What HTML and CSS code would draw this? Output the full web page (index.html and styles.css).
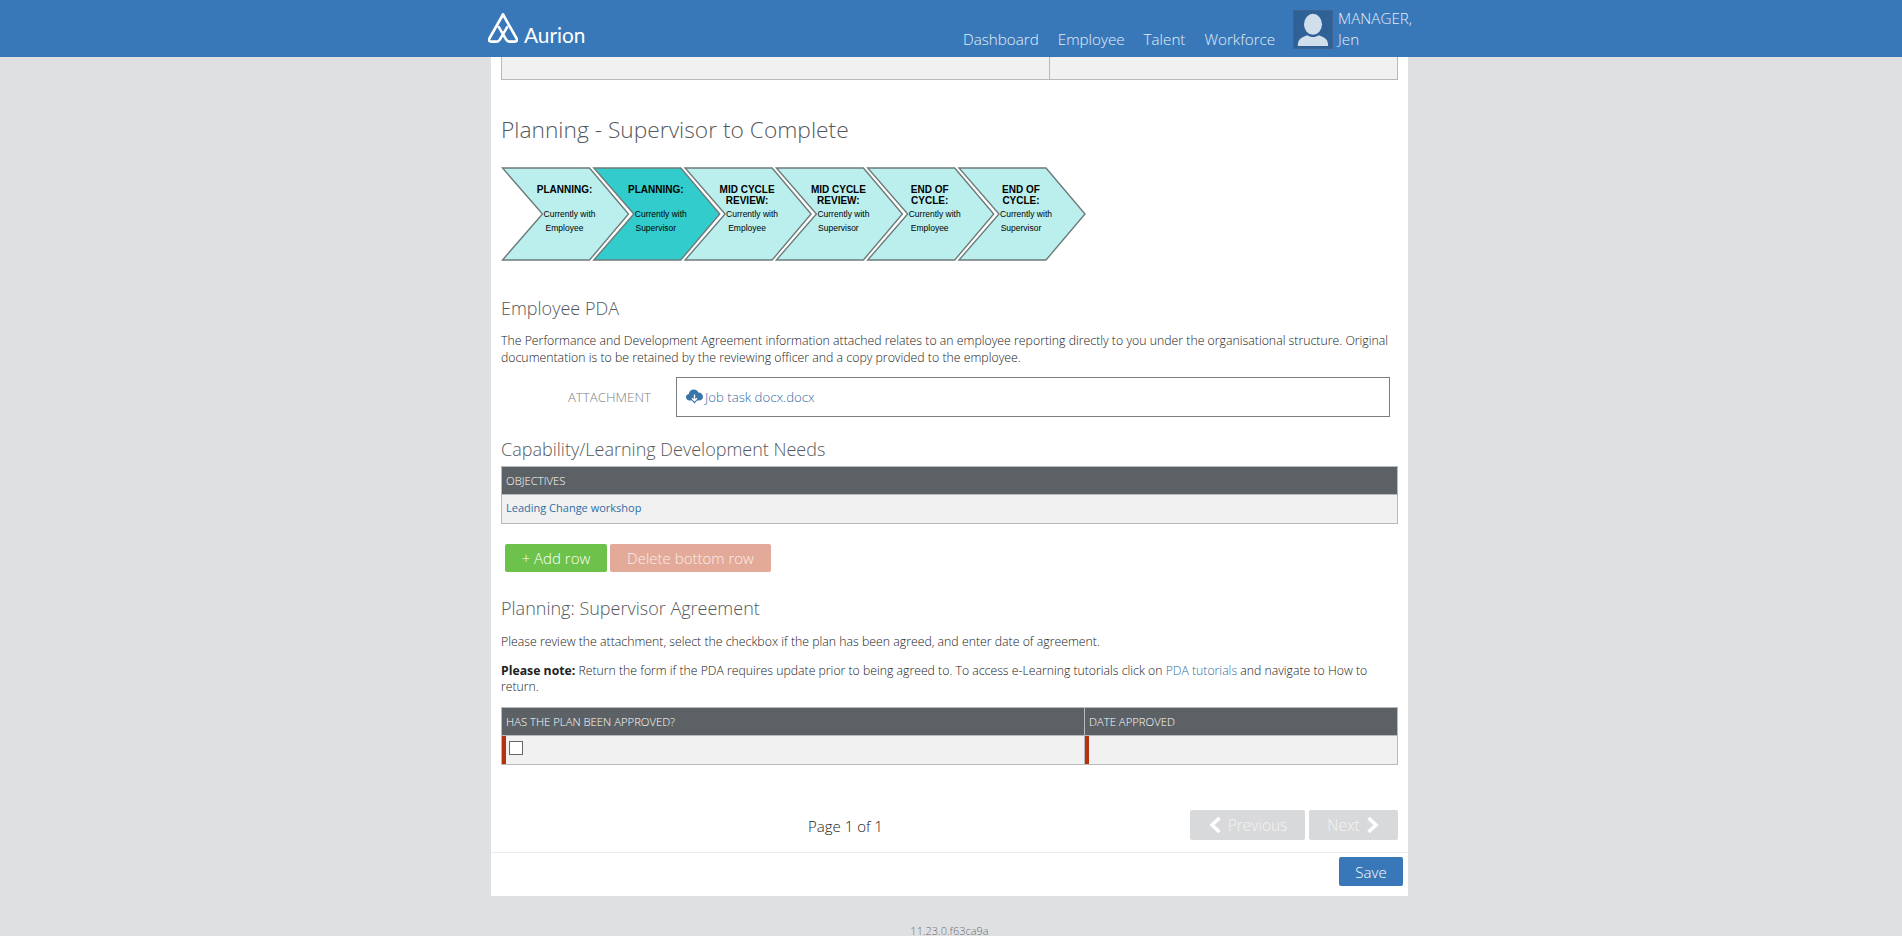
FILE: index.html
```html
<!DOCTYPE html>
<html lang="en">
<head>
    <meta charset="UTF-8">
    <meta name="viewport" content="width=device-width, initial-scale=1.0">
    <title>Planning - Supervisor to Complete</title>
    <link rel="stylesheet" href="styles.css">
</head>
<body>
    <header class="topbar">
        <div class="topbar-inner">
            <a class="logo" href="#">
                <svg class="logo-mark" viewBox="0 0 30 30" width="30" height="30">
                    <path d="M15 1.5 L28.6 25.5 Q30 28.6 26.6 28.6 L21.4 28.6 Q19.4 28.6 18.2 26.6 L10.8 14.2"></path>
                    <path d="M15 1.5 L1.4 25.5 Q0 28.6 3.4 28.6 L8.6 28.6 Q10.6 28.6 11.8 26.6 L19.2 14.2"></path>
                </svg>
                <span class="logo-text">Aurion</span>
            </a>
            <nav class="nav">
                <a href="#">Dashboard</a>
                <a href="#">Employee</a>
                <a href="#">Talent</a>
                <a href="#">Workforce</a>
            </nav>
            <div class="user">
                <div class="avatar">
                    <svg viewBox="0 0 40 39" width="38" height="37">
                        <ellipse cx="20" cy="14" rx="9.5" ry="11"></ellipse>
                        <path d="M4 37 C4 31 6 28 14 25.5 C17 28 23 28 26 25.5 C34 28 36 31 36 37 Z"></path>
                    </svg>
                </div>
                <div class="user-name">MANAGER,<br>Jen</div>
            </div>
        </div>
    </header>

    <div class="wrap">
        <main class="page">
            <div class="content">
                <table class="grid stub">
                    <tr>
                        <td class="stub-left"></td>
                        <td></td>
                    </tr>
                </table>

                <h1>Planning - Supervisor to Complete</h1>

                <svg class="steps" viewBox="0 0 600 96" width="600" height="96">
                    <g transform="translate(1.5 2)">
                        <polygon class="step" points="0,0 87,0 126,46 87,92 0,92 40,46"></polygon>
                        <text class="step-title" x="62" y="25">PLANNING:</text>
                        <text class="step-text" x="67" y="48.5">Currently with</text>
                        <text class="step-text" x="62" y="63">Employee</text>
                    </g>
                    <g transform="translate(92.8 2)">
                        <polygon class="step step-active" points="0,0 87,0 126,46 87,92 0,92 40,46"></polygon>
                        <text class="step-title" x="62" y="25">PLANNING:</text>
                        <text class="step-text" x="67" y="48.5">Currently with</text>
                        <text class="step-text" x="62" y="63">Supervisor</text>
                    </g>
                    <g transform="translate(184.1 2)">
                        <polygon class="step" points="0,0 87,0 126,46 87,92 0,92 40,46"></polygon>
                        <text class="step-title" x="62" y="25">MID CYCLE</text>
                        <text class="step-title" x="62" y="36">REVIEW:</text>
                        <text class="step-text" x="67" y="48.5">Currently with</text>
                        <text class="step-text" x="62" y="63">Employee</text>
                    </g>
                    <g transform="translate(275.4 2)">
                        <polygon class="step" points="0,0 87,0 126,46 87,92 0,92 40,46"></polygon>
                        <text class="step-title" x="62" y="25">MID CYCLE</text>
                        <text class="step-title" x="62" y="36">REVIEW:</text>
                        <text class="step-text" x="67" y="48.5">Currently with</text>
                        <text class="step-text" x="62" y="63">Supervisor</text>
                    </g>
                    <g transform="translate(366.7 2)">
                        <polygon class="step" points="0,0 87,0 126,46 87,92 0,92 40,46"></polygon>
                        <text class="step-title" x="62" y="25">END OF</text>
                        <text class="step-title" x="62" y="36">CYCLE:</text>
                        <text class="step-text" x="67" y="48.5">Currently with</text>
                        <text class="step-text" x="62" y="63">Employee</text>
                    </g>
                    <g transform="translate(458 2)">
                        <polygon class="step" points="0,0 87,0 126,46 87,92 0,92 40,46"></polygon>
                        <text class="step-title" x="62" y="25">END OF</text>
                        <text class="step-title" x="62" y="36">CYCLE:</text>
                        <text class="step-text" x="67" y="48.5">Currently with</text>
                        <text class="step-text" x="62" y="63">Supervisor</text>
                    </g>
                </svg>

                <h2 class="pda-title">Employee PDA</h2>
                <p class="intro">The Performance and Development Agreement information attached relates to an employee reporting directly to you under the organisational structure. Original documentation is to be retained by the reviewing officer and a copy provided to the employee.</p>

                <div class="attachment">
                    <div class="attachment-label">ATTACHMENT</div>
                    <div class="attachment-box">
                        <a href="#">
                            <svg class="cloud" viewBox="0 0 17 15" width="17" height="15">
                                <path class="cloud-fill" d="M3.6 11.6 C1.5 11.6 0 10.2 0 8.3 C0 6.7 1.1 5.4 2.7 5.1 C3 2.5 5.1 0.6 7.8 0.6 C9.9 0.6 11.6 1.8 12.4 3.6 C14.9 3.6 17 5.4 17 7.7 C17 9.9 15.2 11.6 13 11.6 L11.2 11.6 L8.5 14.6 L5.8 11.6 Z"></path>
                                <path class="cloud-arrow" d="M8.5 5.5 V11.5 M6 9.2 L8.5 11.8 L11 9.2"></path>
                            </svg>Job task docx.docx</a>
                    </div>
                </div>

                <h2 class="needs-title">Capability/Learning Development Needs</h2>
                <table class="grid">
                    <thead>
                        <tr><th>Objectives</th></tr>
                    </thead>
                    <tbody>
                        <tr><td><a href="#">Leading Change workshop</a></td></tr>
                    </tbody>
                </table>

                <div class="row-buttons">
                    <button class="btn btn-add">+ Add row</button>
                    <button class="btn btn-delete">Delete bottom row</button>
                </div>

                <h2 class="agree-title">Planning: Supervisor Agreement</h2>
                <p class="review">Please review the attachment, select the checkbox if the plan has been agreed, and enter date of agreement.</p>
                <p class="note"><strong>Please note:</strong> Return the form if the PDA requires update prior to being agreed to. To access e-Learning tutorials click on <a href="#">PDA tutorials</a> and navigate to How to return.</p>

                <table class="grid approve">
                    <thead>
                        <tr>
                            <th class="approve-left">Has the plan been approved?</th>
                            <th>Date approved</th>
                        </tr>
                    </thead>
                    <tbody>
                        <tr>
                            <td class="required"><span class="checkbox"></span></td>
                            <td class="required"></td>
                        </tr>
                    </tbody>
                </table>

                <div class="pager">
                    <div class="page-count">Page 1 of 1</div>
                    <button class="btn btn-page btn-prev">
                        <svg viewBox="0 0 14 18" width="14" height="18"><path d="M11.5 2 L4 9 L11.5 16"></path></svg>
                        Previous
                    </button>
                    <button class="btn btn-page btn-next">
                        Next
                        <svg viewBox="0 0 14 18" width="14" height="18"><path d="M2.5 2 L10 9 L2.5 16"></path></svg>
                    </button>
                </div>
            </div>

            <div class="actions">
                <button class="btn btn-save">Save</button>
            </div>
        </main>
        <footer class="version">11.23.0.f63ca9a</footer>
    </div>
</body>
</html>
```

FILE: styles.css
```css
html, body {
    height: 936px;
    overflow: hidden;
}
body {
    margin: 0;
    font-family: "Open Sans", Arial, sans-serif;
    font-size: 12.3px;
    font-weight: 300;
    color: #222222;
    background-color: #dfe0e2;
}
a {
    color: #2f6ea5;
    text-decoration: none;
}
p {
    margin: 0;
}

/* top bar */
.topbar {
    height: 57px;
    background-color: #3878b9;
}
.topbar-inner {
    width: 917px;
    height: 57px;
    margin-left: 488px;
    display: flex;
    align-items: flex-start;
}
.logo {
    display: flex;
    align-items: flex-start;
    color: #ffffff;
    width: 475px;
    flex-shrink: 0;
}
.logo-mark {
    margin-top: 13px;
    fill: none;
    stroke: #ffffff;
    stroke-width: 2.6;
    stroke-linejoin: round;
    stroke-linecap: round;
}
.logo-text {
    font-family: Lato, sans-serif;
    font-size: 20.8px;
    font-weight: 400;
    line-height: 30px;
    margin: 20px 0 0 6px;
}
.nav {
    display: flex;
    gap: 19px;
    margin-top: 29px;
    font-size: 15.2px;
    line-height: 21px;
}
.nav a {
    color: #e2eefa;
    font-weight: 300;
}
.user {
    display: flex;
    margin-left: 18px;
    margin-top: 10px;
}
.avatar {
    width: 38px;
    height: 37px;
    border: 1px solid #3e6390;
    background-color: #2f6196;
    fill: #d1dfec;
}
.avatar svg {
    display: block;
}
.user-name {
    margin: -2px 0 0 5px;
    color: #e2eefa;
    font-size: 15.2px;
    font-weight: 300;
    line-height: 21px;
    white-space: nowrap;
}

/* white page */
.wrap {
    padding-right: 3px;
}
.page {
    width: 917px;
    margin: 0 auto;
    background-color: #ffffff;
}
.content {
    padding: 0 10px;
}
h1 {
    margin: 34px 0 0;
    font-size: 22.75px;
    font-weight: 300;
    line-height: 32px;
    color: #55595c;
}
h2 {
    margin: 0;
    font-size: 18px;
    font-weight: 300;
    line-height: 24px;
    color: #55595c;
}
.steps {
    display: block;
    margin: 20px 0 0;
}
.step {
    fill: #bbefee;
    stroke: #6d7b7b;
    stroke-width: 1.4;
}
.step-active {
    fill: #33cccc;
}
.step-title {
    font-family: "Liberation Sans", Arial, sans-serif;
    font-size: 10px;
    font-weight: bold;
    text-anchor: middle;
    fill: #000000;
}
.step-text {
    font-family: "Liberation Sans", Arial, sans-serif;
    font-size: 8.5px;
    text-anchor: middle;
    fill: #000000;
}
.pda-title {
    margin-top: 34px;
}
.intro {
    margin-top: 12px;
    line-height: 17px;
}

/* attachment */
.attachment {
    display: flex;
    align-items: center;
    margin: 11px 8px 0 0;
}
.attachment-label {
    width: 150px;
    text-align: right;
    font-size: 13.3px;
    font-weight: 300;
    color: #7b7f82;
}
.attachment-box {
    flex: 1;
    margin-left: 25px;
    height: 38px;
    padding-left: 9px;
    border: 1px solid #7b7f82;
    font-size: 13.2px;
    line-height: 38px;
}
.cloud {
    vertical-align: -2px;
    margin-right: 2px;
}
.cloud-fill {
    fill: #3a75a8;
}
.cloud-arrow {
    fill: none;
    stroke: #ffffff;
    stroke-width: 1.3;
}
.needs-title {
    margin-top: 20px;
}

/* tables */
.grid {
    width: 100%;
    border-collapse: collapse;
    table-layout: fixed;
    margin-top: 5px;
}
.grid th, .grid td {
    border: 1px solid #b9b9b9;
    padding: 0 4px;
    text-align: left;
}
.grid th {
    height: 27px;
    background-color: #5c6165;
    color: #ffffff;
    font-size: 11.3px;
    font-weight: 300;
    text-transform: uppercase;
}
.grid td {
    height: 25px;
    padding-bottom: 3px;
    background-color: #f1f1f1;
    font-size: 11px;
    font-weight: 400;
}
.stub {
    margin-top: 0;
}
.stub td {
    height: 19px;
    border-top: none;
}
.stub-left {
    width: 539px;
}
.row-buttons {
    display: flex;
    gap: 3px;
    margin: 20px 0 0 4px;
}
.btn {
    height: 28px;
    padding: 0;
    border: none;
    border-radius: 2px;
    font-family: inherit;
    font-size: 15px;
    font-weight: 300;
    color: #ffffff;
}
.btn-add {
    width: 102px;
    background-color: #6cc24a;
}
.btn-delete {
    width: 161px;
    background-color: #e3a999;
    color: #fbeee9;
}
.agree-title {
    margin-top: 24px;
}
.review {
    margin-top: 13px;
    line-height: 17px;
}
.note {
    margin-top: 13px;
    font-size: 12.25px;
    line-height: 16px;
}
.note strong {
    font-weight: 700;
}
.approve {
    margin-top: 12px;
}
.approve-left {
    width: 574px;
}
.required {
    box-shadow: inset 4px 0 0 #b5310f;
}
.grid td.required {
    padding-left: 7px;
}
.checkbox {
    display: block;
    width: 12px;
    height: 12px;
    margin-bottom: 1px;
    background-color: #ffffff;
    border: 1px solid #666666;
}

/* pager and save */
.pager {
    display: flex;
    align-items: center;
    margin-top: 45px;
}
.page-count {
    flex: 1;
    text-align: center;
    font-size: 15px;
    color: #222222;
    padding-top: 2px;
}
.btn-page {
    height: 30px;
    background-color: #d8d9db;
    color: #f4f4f4;
    font-size: 15.5px;
    display: flex;
    align-items: center;
    justify-content: center;
    gap: 6px;
}
.btn-page svg {
    fill: none;
    stroke: #ffffff;
    stroke-width: 3.6;
}
.btn-prev {
    width: 115px;
}
.btn-next {
    width: 89px;
    margin-left: 4px;
}
.actions {
    display: flex;
    justify-content: flex-end;
    margin-top: 12px;
    padding: 4px 5px 10px 0;
    border-top: 1px solid #ececec;
}
.btn-save {
    width: 64px;
    height: 29px;
    background-color: #3878b9;
}
.version {
    width: 917px;
    margin: 0 auto;
    padding-top: 29px;
    text-align: center;
    font-size: 11px;
    font-weight: 300;
    line-height: 12px;
    color: #6d6f72;
}
```
